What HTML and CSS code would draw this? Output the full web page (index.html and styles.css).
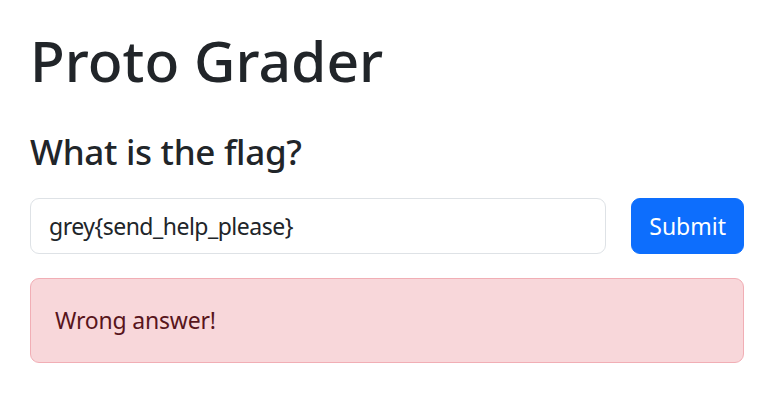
FILE: index.html
```html
<!DOCTYPE html>
<html lang="en">
<head>
<meta charset="utf-8">
<title>Proto Grader</title>
<link rel="stylesheet" href="styles.css">
</head>
<body>
<main class="container">
  <h1 class="title">Proto Grader</h1>
  <h2 class="question">What is the flag?</h2>
  <form class="flag-form" onsubmit="return false;">
    <input class="flag-input" type="text" value="grey{send_help_please}">
    <button class="submit-btn" type="submit">Submit</button>
  </form>
  <div class="alert">Wrong answer!</div>
</main>
</body>
</html>
```
FILE: styles.css
```css
html, body {
  margin: 0;
  padding: 0;
  background: #fff;
}
body {
  font-family: "Noto Sans", "Open Sans", sans-serif;
  color: #212529;
}
.container {
  width: 714px;
  padding: 27px 0 0 30px;
  box-sizing: content-box;
}
.title {
  font-size: 57px;
  font-weight: 500;
  line-height: 67px;
  margin: 0 0 37px 0;
}
.question {
  font-size: 35px;
  font-weight: 500;
  line-height: 42px;
  letter-spacing: -0.3px;
  margin: 0 0 25px 0;
}
.flag-form {
  display: flex;
  gap: 25px;
  margin: 0 0 24px 0;
}
.flag-input {
  flex: 1;
  min-width: 0;
  font-family: inherit;
  font-size: 23px;
  line-height: 34px;
  letter-spacing: -0.5px;
  color: #212529;
  padding: 10px 18px;
  border: 1px solid #dee2e6;
  border-radius: 9px;
  background: #fff;
  outline: none;
}
.submit-btn {
  font-family: inherit;
  font-size: 23px;
  line-height: 34px;
  color: #fff;
  background: #0d6efd;
  border: 1px solid #0d6efd;
  border-radius: 9px;
  padding: 10px 17px;
  cursor: pointer;
}
.alert {
  font-size: 23px;
  line-height: 34px;
  letter-spacing: -0.2px;
  color: #58151c;
  background: #f8d7da;
  border: 1px solid #f1aeb5;
  border-radius: 9px;
  padding: 24px 24px 25px;
}
```
